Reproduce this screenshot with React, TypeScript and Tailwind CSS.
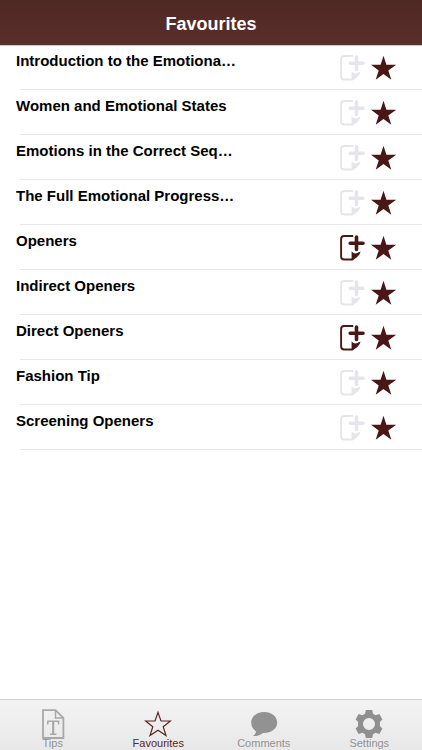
import type { ReactNode } from "react";

type Favourite = { title: string; hasNote: boolean };

const favourites: Favourite[] = [
  { title: "Introduction to the Emotiona…", hasNote: false },
  { title: "Women and Emotional States", hasNote: false },
  { title: "Emotions in the Correct Seq…", hasNote: false },
  { title: "The Full Emotional Progress…", hasNote: false },
  { title: "Openers", hasNote: true },
  { title: "Indirect Openers", hasNote: false },
  { title: "Direct Openers", hasNote: true },
  { title: "Fashion Tip", hasNote: false },
  { title: "Screening Openers", hasNote: false },
];

function NoteIcon() {
  return (
    <svg viewBox="0 0 26 26" className="size-[26px]" fill="none" aria-hidden="true">
      <path
        d="M13.2 1H4.2Q1.1 1 1.1 4.1V21.4Q1.1 24.5 4.2 24.5H12.4L19 18"
        stroke="currentColor"
        strokeWidth="1.9"
      />
      <path d="M11.6 25.3V16.2Q13 18.2 15 18.4Q17.4 18.4 20.6 16.4Q19.4 22 11.6 25.3Z" fill="currentColor" />
      <path d="M16.5 2V14.4M10.2 8.2H23" stroke="currentColor" strokeWidth="3.6" strokeLinecap="round" />
    </svg>
  );
}

function StarIcon() {
  return (
    <svg viewBox="0 0 26 26" className="size-[26px]" fill="currentColor" aria-hidden="true">
      <path d="M12.5 0.8L15.4 9.8H25.2L17.3 15.4L20.3 24.8L12.5 19L4.7 24.8L7.7 15.4L0 9.8H9.6Z" />
    </svg>
  );
}

function TipsIcon() {
  return (
    <svg viewBox="0 0 28 30" className="h-[30px] w-7" fill="none" stroke="#a8a8a8" aria-hidden="true">
      <path d="M4 1.2H16.5L24.4 9V29H4Z" strokeWidth="1.8" />
      <path d="M16.5 1.2V9H24.4" strokeWidth="1.5" />
      <path d="M8.8 15.5V12.3H19.6V15.5M11 25.2H17.4" strokeWidth="1.5" />
      <path d="M14.2 12.3V25" strokeWidth="2.2" />
    </svg>
  );
}

function StarOutlineIcon() {
  return (
    <svg viewBox="0 0 28 30" className="h-[30px] w-7" fill="none" stroke="#5a2524" aria-hidden="true">
      <path d="M14 3.4L17 12H26.4L19.2 17.8L22 26.6L14 21.2L6 26.6L8.8 17.8L1.6 12H11Z" strokeWidth="1.2" />
    </svg>
  );
}

function CommentIcon() {
  return (
    <svg viewBox="0 0 28 30" className="h-[30px] w-7" fill="#929292" aria-hidden="true">
      <path d="M14.2 3C21.5 3 27.2 7.5 27.2 13.6C27.2 20 21 24.4 13 24C10.4 26.3 6.7 27.3 2.8 27.1C4.9 25.8 6 24.2 6.1 22.3C3 20.4 1.2 17.3 1.2 13.6C1.2 7.5 6.9 3 14.2 3Z" />
    </svg>
  );
}

function GearIcon() {
  return (
    <svg viewBox="0 0 28 30" className="h-[30px] w-7" fill="#8f8f8f" aria-hidden="true">
      <path
        fillRule="evenodd"
        d="M10.8 1H17.2L18 4.8L20.6 6.2L24.4 5L27.4 10.4L24.8 13Q25.3 15 24.8 17L27.4 19.6L24.4 25L20.6 23.8L18 25.2L17.2 29H10.8L10 25.2L7.4 23.8L3.6 25L.6 19.6L3.2 17Q2.7 15 3.2 13L.6 10.4L3.6 5L7.4 6.2L10 4.8ZM14 9A6 6 0 1 0 14 21A6 6 0 1 0 14 9Z"
      />
    </svg>
  );
}

function Tab({ label, icon, active = false }: { label: string; icon: ReactNode; active?: boolean }) {
  return (
    <button
      type="button"
      aria-current={active ? "page" : undefined}
      className={`flex flex-1 flex-col items-center pt-[9px] text-[11px] leading-3 ${
        active ? "text-[#5a2524]" : "text-[#929292]"
      }`}
    >
      {icon}
      <span className="-mt-0.5">{label}</span>
    </button>
  );
}

export default function App() {
  return (
    <div className="flex min-h-screen flex-col bg-white font-['Liberation_Sans',Arial,sans-serif]">
      <header className="flex h-[45px] items-center justify-center bg-linear-to-b from-[#4f2723] to-[#592f2b] shadow-[0_1px_0_#d9c8c7]">
        <h1 className="pt-0.5 text-lg leading-6 font-bold text-white">Favourites</h1>
      </header>

      <main className="flex-1">
        <ul>
          {favourites.map(({ title, hasNote }) => (
            <li key={title} className="flex h-[45px] flex-col">
              <div className="flex flex-1 items-start justify-between pr-[25px] pl-4">
                <h2 className="min-w-0 truncate pt-1.5 text-[15px] leading-5 font-bold text-black">{title}</h2>
                <div className="flex shrink-0 gap-[5px] pt-2.5 text-[#4a1716]">
                  <button
                    type="button"
                    aria-label={hasNote ? "Open note" : "Add note"}
                    className={hasNote ? "" : "text-[#e6e5eb]"}
                  >
                    <NoteIcon />
                  </button>
                  <button type="button" aria-label="Remove favourite">
                    <StarIcon />
                  </button>
                </div>
              </div>
              <div className="ml-5 h-px bg-[#e8e8e8]" />
            </li>
          ))}
        </ul>
      </main>

      <nav className="flex h-[51px] border-t border-[#d2d2d2] bg-linear-to-b from-[#f3f3f3] to-[#e8e8e8]">
        <Tab label="Tips" icon={<TipsIcon />} />
        <Tab label="Favourites" icon={<StarOutlineIcon />} active />
        <Tab label="Comments" icon={<CommentIcon />} />
        <Tab label="Settings" icon={<GearIcon />} />
      </nav>
    </div>
  );
}
